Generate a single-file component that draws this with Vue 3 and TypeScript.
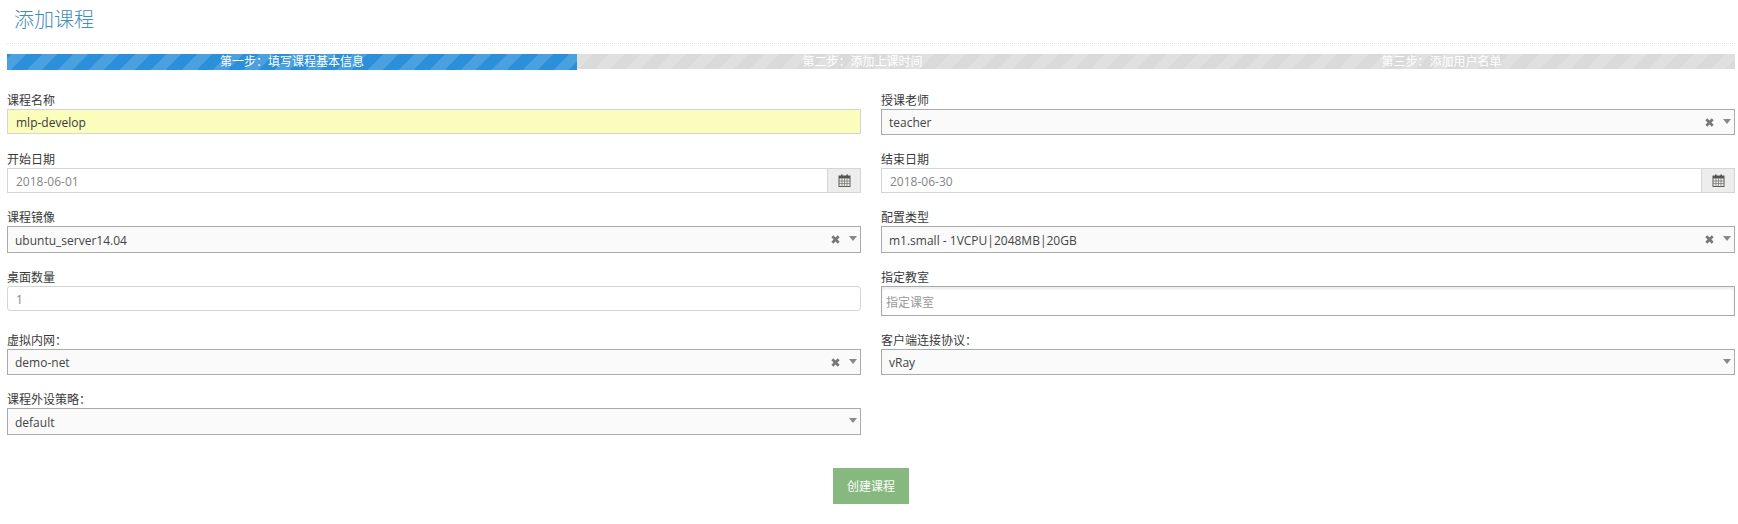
<template>
  <div class="page">
    <h1 class="title">添加课程</h1>
    <div class="steps">
      <div v-for="(s, i) in steps" :key="s" class="step" :class="{ active: i === 0 }">{{ s }}</div>
    </div>
    <form class="form" @submit.prevent>
      <div class="field" v-for="f in fields" :key="f.label">
        <label class="label">{{ f.label }}</label>

        <div v-if="f.kind === 'date'" class="date" :style="{ height: f.h + 'px' }">
          <div class="date-text">{{ f.value }}</div>
          <div class="date-btn">
            <svg width="13" height="13" viewBox="0 0 13 13">
              <rect x="1" y="2" width="11" height="10.5" fill="#f4f1ea" stroke="#5a5a5a" />
              <rect x="1" y="2" width="11" height="2.5" fill="#555" />
              <rect x="3" y="0.5" width="1.6" height="3" fill="#555" />
              <rect x="8.4" y="0.5" width="1.6" height="3" fill="#555" />
              <path d="M4 4.5v8M6.5 4.5v8M9 4.5v8M1 7h11M1 9.6h11" stroke="#777" stroke-width="0.8" fill="none" />
            </svg>
          </div>
        </div>

        <div v-else-if="f.kind === 'select'" class="select" :style="{ height: f.h + 'px' }">
          <span class="select-text">{{ f.value }}</span>
          <svg v-if="f.clear" class="clear" width="9" height="9" viewBox="0 0 9 9">
            <path d="M1.3 1.3l6.4 6.4M7.7 1.3L1.3 7.7" stroke="#777" stroke-width="2.7" />
          </svg>
          <span class="caret"></span>
        </div>

        <div v-else class="input" :class="f.cls" :style="{ height: f.h + 'px' }">{{ f.value }}</div>
      </div>
    </form>
    <div class="actions">
      <button class="submit" type="button">创建课程</button>
    </div>
  </div>
</template>

<script setup lang="ts">
interface Field {
  label: string
  value: string
  kind: 'input' | 'date' | 'select'
  h: number
  clear?: boolean
  cls?: string
}

const steps = ['第一步：填写课程基本信息', '第二步：添加上课时间', '第三步：添加用户名单']

const fields: Field[] = [
  { label: '课程名称', value: 'mlp-develop', kind: 'input', h: 25, cls: 'filled' },
  { label: '授课老师', value: 'teacher', kind: 'select', h: 26, clear: true },
  { label: '开始日期', value: '2018-06-01', kind: 'date', h: 25 },
  { label: '结束日期', value: '2018-06-30', kind: 'date', h: 25 },
  { label: '课程镜像', value: 'ubuntu_server14.04', kind: 'select', h: 27, clear: true },
  { label: '配置类型', value: 'm1.small - 1VCPU|2048MB|20GB', kind: 'select', h: 27, clear: true },
  { label: '桌面数量', value: '1', kind: 'input', h: 25, cls: 'count' },
  { label: '指定教室', value: '指定课室', kind: 'input', h: 30, cls: 'room' },
  { label: '虚拟内网：', value: 'demo-net', kind: 'select', h: 26, clear: true },
  { label: '客户端连接协议：', value: 'vRay', kind: 'select', h: 26 },
  { label: '课程外设策略：', value: 'default', kind: 'select', h: 27 },
]
</script>

<style>
body {
  background: #fff;
}
</style>

<style scoped>
.page {
  box-sizing: border-box;
  width: 1738px;
  height: 524px;
  padding: 0 3px 0 7px;
  font-family: "Open Sans", "Noto Sans CJK SC", sans-serif;
  font-size: 12px;
  color: #393939;
  overflow: hidden;
}
.title {
  box-sizing: border-box;
  height: 44px;
  margin: 0 0 10px;
  padding: 6px 0 0 7px;
  border-bottom: 1px dotted #e2e2e2;
  font-size: 20px;
  line-height: 28px;
  font-weight: 300;
  color: #438eb9;
}
.steps {
  display: grid;
  grid-template-columns: 570px 571px 1fr;
  height: 15px;
  background-color: #dadada;
  background-image: linear-gradient(135deg, rgba(255,255,255,.15) 25%, transparent 25%, transparent 50%, rgba(255,255,255,.15) 50%, rgba(255,255,255,.15) 75%, transparent 75%, transparent);
  background-size: 31px 31px;
  background-position: 13px 0;
}
.step {
  color: #fff;
  text-align: center;
  line-height: 16px;
  white-space: nowrap;
}
.step.active {
  background-color: #2b8fd9;
  background-image: linear-gradient(135deg, rgba(255,255,255,.15) 25%, transparent 25%, transparent 50%, rgba(255,255,255,.15) 50%, rgba(255,255,255,.15) 75%, transparent 75%, transparent);
  background-size: 31px 31px;
  background-position: 4px 0;
}
.form {
  display: grid;
  grid-template-columns: 854px 854px;
  column-gap: 20px;
  row-gap: 15px;
  margin-top: 22px;
  align-items: start;
}
.label {
  display: block;
  height: 18px;
  line-height: 20px;
  color: #393939;
}
.input,
.select,
.date {
  box-sizing: border-box;
  display: flex;
  align-items: center;
  border: 1px solid #d5d5d5;
}
.input {
  padding: 1px 8px 0;
  color: #858585;
}
.input.filled {
  background: #fbfdbd;
  color: #393939;
}
.input.count {
  border-radius: 3px;
}
.input.room {
  padding: 1px 4px 0;
  border-color: #aaa;
  color: #999;
  box-shadow: inset 0 2px 3px rgba(0, 0, 0, .08);
}
.date-text {
  flex: 1;
  padding: 1px 8px 0;
  color: #858585;
}
.date-btn {
  display: flex;
  align-items: center;
  justify-content: center;
  box-sizing: border-box;
  width: 33px;
  height: 100%;
  border-left: 1px solid #d5d5d5;
  background: #ededed;
}
.select {
  padding: 0 3px 0 7px;
  border-color: #aaa;
  background: #fafafa;
  color: #444;
}
.select-text {
  flex: 1;
  padding-top: 1px;
}
.clear {
  margin-right: 9px;
}
.caret {
  width: 0;
  height: 0;
  margin-bottom: 2px;
  border-left: 4px solid transparent;
  border-right: 4px solid transparent;
  border-top: 5px solid #888;
}
.actions {
  display: flex;
  justify-content: center;
  margin-top: 33px;
}
.submit {
  width: 76px;
  height: 36px;
  padding: 0;
  border: 0;
  background: #87b87f;
  color: #fff;
  font-family: inherit;
  font-size: 12px;
}
</style>
